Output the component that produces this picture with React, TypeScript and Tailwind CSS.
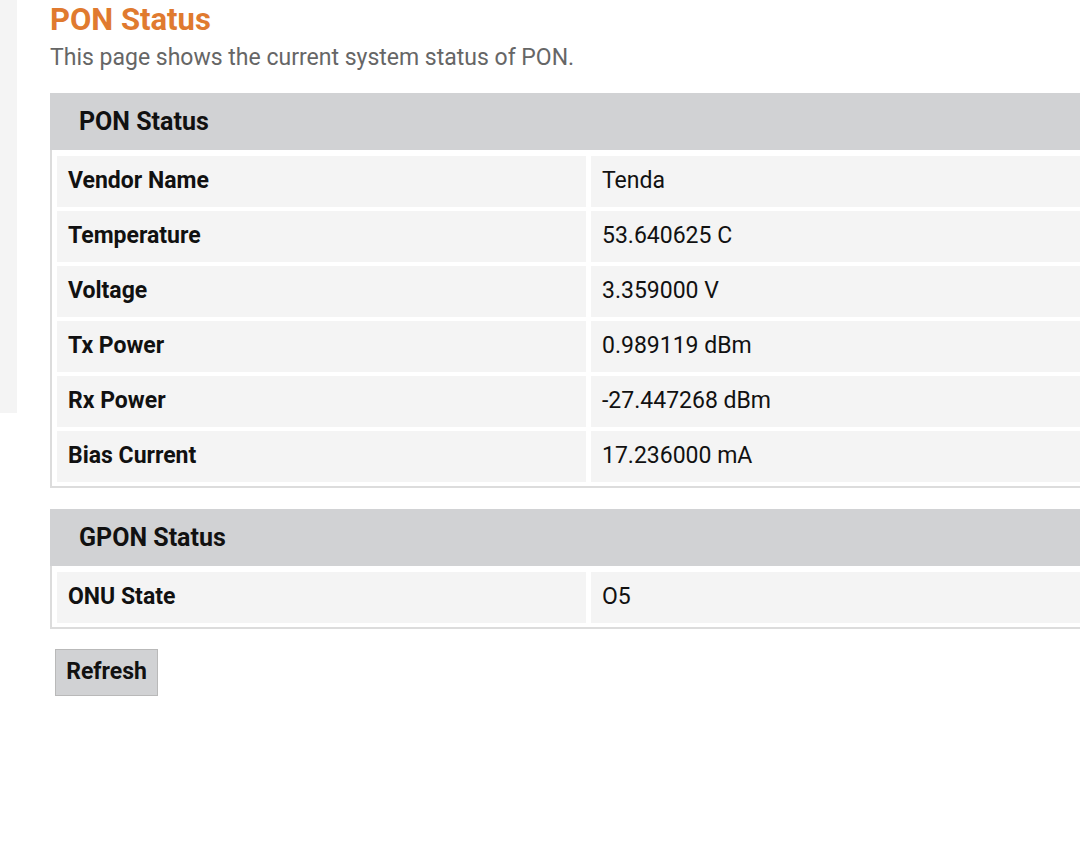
import React from "react";

// PON status page — a router-admin style read-only status table.

const ponRows: [string, string][] = [
  ["Vendor Name", "Tenda"],
  ["Temperature", "53.640625 C"],
  ["Voltage", "3.359000 V"],
  ["Tx Power", "0.989119 dBm"],
  ["Rx Power", "-27.447268 dBm"],
  ["Bias Current", "17.236000 mA"],
];

const gponRows: [string, string][] = [["ONU State", "O5"]];

function StatusTable({ title, rows }: { title: string; rows: [string, string][] }): React.ReactElement {
  return (
    <div className="w-[1100px] border-b-2 border-l-2 border-[#dcdcdc]">
      <div className="-ml-[2px] flex h-[57px] items-center bg-[#d1d2d4] pl-[29px] text-[25px] font-bold text-[#111]">
        {title}
      </div>
      <div className="flex flex-col gap-[4px] pb-[4px] pl-[5px] pt-[6px]">
        {rows.map(([k, v]) => (
          <div key={k} className="flex h-[51px] gap-[5px]">
            <div className="flex w-[529px] items-center bg-[#f4f4f4] pl-[11px] text-[23px] font-bold text-[#111]">{k}</div>
            <div className="flex flex-1 items-center bg-[#f4f4f4] pl-[11px] text-[23px] text-[#111]">{v}</div>
          </div>
        ))}
      </div>
    </div>
  );
}

export default function App(): React.ReactElement {
  return (
    <div className="flex h-[863px] w-[1080px] overflow-hidden bg-white font-['Roboto',_sans-serif]">
      <div className="h-[413px] w-[17px] shrink-0 bg-[#f4f4f4]" />
      <div className="flex flex-col pl-[33px]">
        <h1 className="mt-[2px] text-[31px] font-bold leading-[36px] text-[#e07a2f]">PON Status</h1>
        <p className="mt-[6px] text-[23px] leading-[28px] text-[#666]">This page shows the current system status of PON.</p>
        <div className="mt-[21px]">
          <StatusTable title="PON Status" rows={ponRows} />
        </div>
        <div className="mt-[21px]">
          <StatusTable title="GPON Status" rows={gponRows} />
        </div>
        <div className="mt-[20px] pl-[5px]">
          <button type="button" className="h-[47px] w-[103px] border border-[#b9b9b9] bg-[#d1d2d4] text-[23px] font-bold text-[#111]">
            Refresh
          </button>
        </div>
      </div>
    </div>
  );
}
